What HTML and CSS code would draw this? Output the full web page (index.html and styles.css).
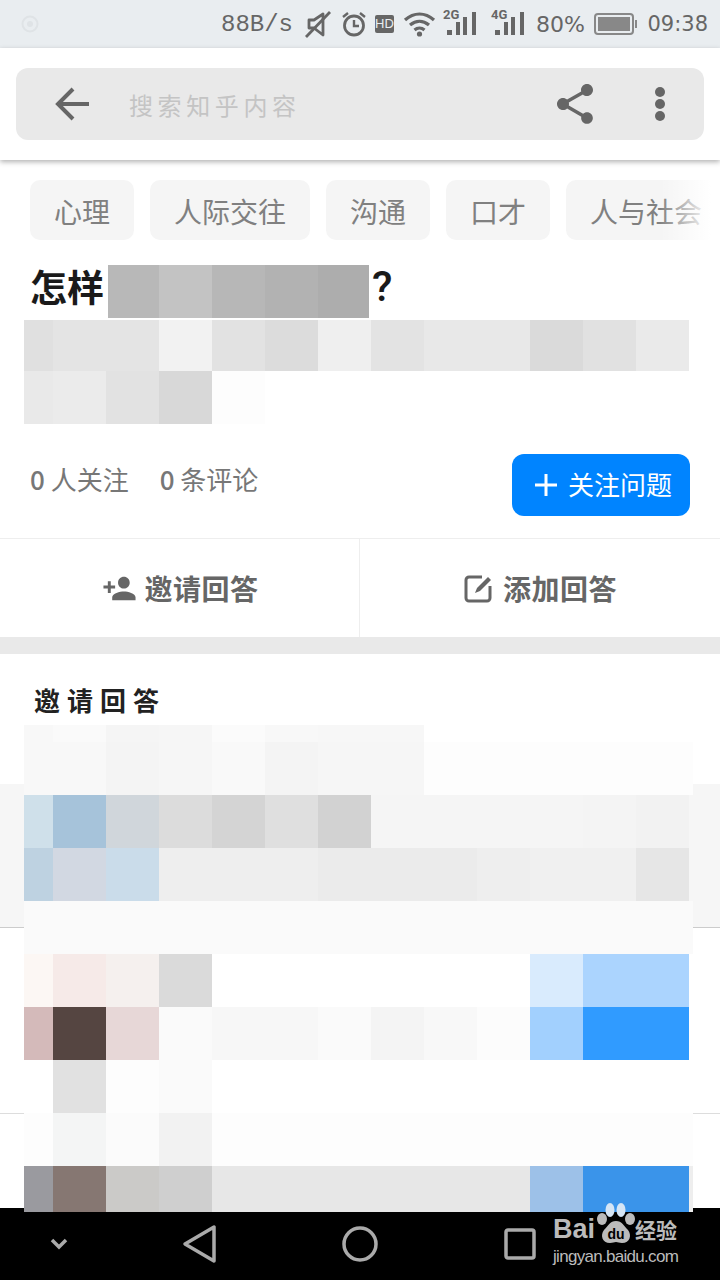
FILE: index.html
```html
<!DOCTYPE html>
<html lang="zh-CN">
<head>
    <meta charset="UTF-8">
    <title>邀请回答</title>
    <link rel="stylesheet" href="styles.css">
</head>
<body>
<div class="screen">
    <div class="status-bar">
        <svg class="status-logo" width="18" height="18" viewBox="0 0 18 18"><circle cx="9" cy="9" r="7.5" fill="none" stroke="#dfe3e6" stroke-width="2"/><circle cx="9" cy="9" r="3" fill="#dfe3e6"/></svg>
        <span class="net-speed">88B/s</span>
        <svg width="29" height="28" viewBox="0 0 29 28"><path d="M5 10h5l9-6v21l-9-7H5z" fill="none" stroke="#666" stroke-width="2.800" stroke-linejoin="round"/><path d="M2 27L26 2" stroke="#666" stroke-width="2.800"/></svg>
        <svg width="24" height="28" viewBox="0 0 24 28"><circle cx="12" cy="15.500" r="9.500" fill="none" stroke="#666" stroke-width="2.800"/><path d="M12 10v6h5" fill="none" stroke="#666" stroke-width="2.400"/><path d="M1 7l5-4M23 7l-5-4" stroke="#666" stroke-width="2.400"/></svg>
        <span class="hd-badge">HD</span>
        <svg class="wifi-icon" width="33" height="26" viewBox="0 0 33 26"><path d="M2 9c9-8 20-8 29 0M7 14c6-5 13-5 19 0M11.500 19c3-2.500 7-2.500 10 0" fill="none" stroke="#666" stroke-width="3.200"/><circle cx="16.500" cy="23" r="2.600" fill="#666"/></svg>
        <svg width="33" height="36" viewBox="0 0 33 36"><text x="0" y="13" class="net-type">2G</text><path d="M4 24h5v5H4zM13 16h4v13h-4zM20 11h4v18h-4zM29 6h4v23h-4z" fill="#666"/></svg>
        <svg width="39" height="36" viewBox="0 0 39 36"><text x="6" y="13" class="net-type">4G</text><path d="M10 24h5v5h-5zM19 16h4v13h-4zM26 11h4v18h-4zM35 6h4v23h-4z" fill="#666"/></svg>
        <span class="battery-pct">80%</span>
        <svg width="44" height="24" viewBox="0 0 44 24"><rect x="1" y="2" width="38" height="20" rx="3" fill="none" stroke="#888" stroke-width="2"/><rect x="4" y="5" width="32" height="14" fill="#888"/><rect x="41" y="8" width="2" height="8" fill="#888"/></svg>
        <span class="clock">09:38</span>
    </div>

    <header class="top-bar">
        <div class="search-box">
            <svg class="back-icon" width="36" height="36" viewBox="0 0 36 36"><path d="M34 18H4M18 3L3 18l15 15" fill="none" stroke="#666" stroke-width="4"/></svg>
            <span class="search-hint">搜索知乎内容</span>
            <svg class="share-icon" width="48" height="48" viewBox="0 0 24 24"><path fill="#666" d="M18 16.080c-.76 0-1.440.3-1.960.77L8.910 12.700c.05-.23.09-.46.09-.7s-.04-.47-.09-.7l7.050-4.110c.54.5 1.250.81 2.040.81 1.660 0 3-1.340 3-3s-1.340-3-3-3-3 1.340-3 3c0 .24.04.47.09.7L8.040 9.810C7.500 9.310 6.790 9 6 9c-1.660 0-3 1.340-3 3s1.340 3 3 3c.79 0 1.500-.31 2.040-.81l7.120 4.160c-.05.21-.08.43-.08.65 0 1.610 1.310 2.920 2.920 2.920 1.610 0 2.920-1.310 2.920-2.920s-1.310-2.920-2.920-2.920z"/></svg>
            <svg class="more-icon" width="12" height="36" viewBox="0 0 12 36"><circle cx="6" cy="6" r="5" fill="#666"/><circle cx="6" cy="18" r="5" fill="#666"/><circle cx="6" cy="30" r="5" fill="#666"/></svg>
        </div>
    </header>

    <main class="page">
        <div class="topic-row">
            <span class="topic">心理</span>
            <span class="topic">人际交往</span>
            <span class="topic">沟通</span>
            <span class="topic">口才</span>
            <span class="topic">人与社会</span>
            <div class="topic-fade"></div>
        </div>

        <h1 class="question-title">怎样<svg class="title-mosaic" width="261" height="53" viewBox="108 265 261 53" shape-rendering="crispEdges"><rect x="108" y="265" width="51" height="53" fill="#b8b8b8"/><rect x="159" y="265" width="53" height="53" fill="#c3c3c3"/><rect x="212" y="265" width="53" height="53" fill="#b7b7b7"/><rect x="265" y="265" width="53" height="53" fill="#b2b2b2"/><rect x="318" y="265" width="51" height="53" fill="#adadad"/></svg><span class="question-mark">?</span></h1>

        <svg class="desc-mosaic" width="665" height="104" viewBox="24 320 665 104" shape-rendering="crispEdges">
            <rect x="24" y="320" width="29" height="51" fill="#e0e0e0"/>
            <rect x="53" y="320" width="106" height="51" fill="#e4e4e4"/>
            <rect x="159" y="320" width="53" height="51" fill="#f2f2f2"/>
            <rect x="212" y="320" width="53" height="51" fill="#e2e2e2"/>
            <rect x="265" y="320" width="53" height="51" fill="#dcdcdc"/>
            <rect x="318" y="320" width="53" height="51" fill="#efefef"/>
            <rect x="371" y="320" width="53" height="51" fill="#e3e3e3"/>
            <rect x="424" y="320" width="106" height="51" fill="#e8e8e8"/>
            <rect x="530" y="320" width="53" height="51" fill="#dadada"/>
            <rect x="583" y="320" width="53" height="51" fill="#e1e1e1"/>
            <rect x="636" y="320" width="53" height="51" fill="#eaeaea"/>
            <rect x="24" y="371" width="29" height="53" fill="#e9e9e9"/>
            <rect x="53" y="371" width="53" height="53" fill="#ebebeb"/>
            <rect x="106" y="371" width="53" height="53" fill="#e2e2e2"/>
            <rect x="159" y="371" width="53" height="53" fill="#d8d8d8"/>
            <rect x="212" y="371" width="53" height="53" fill="#fdfdfd"/>
        </svg>

        <div class="meta-row">
            <div class="meta-counts">
                <span><b>0</b> 人关注</span>
                <span><b>0</b> 条评论</span>
            </div>
            <button class="follow-btn"><svg width="24" height="24" viewBox="0 0 24 24"><path d="M12 1v22M1 12h22" stroke="#fff" stroke-width="3"/></svg><span class="follow-label">关注问题</span></button>
        </div>

        <div class="action-row">
            <div class="action action-invite">
                <svg width="35" height="35" viewBox="0 0 24 24"><path fill="#666" d="M15 12c2.210 0 4-1.790 4-4s-1.790-4-4-4-4 1.790-4 4 1.790 4 4 4zm-9-2V7H4v3H1v2h3v3h2v-3h3v-2H6zm9 4c-2.670 0-8 1.340-8 4v2h16v-2c0-2.660-5.330-4-8-4z"/></svg>
                邀请回答
            </div>
            <div class="action action-answer">
                <svg width="30" height="30" viewBox="0 0 30 30"><path d="M18 4H5a3 3 0 0 0-3 3v18a3 3 0 0 0 3 3h18a3 3 0 0 0 3-3V13" fill="none" stroke="#666" stroke-width="3"/><path d="M11 20l2-5L24 4l3 3-11 11z" fill="#666"/></svg>
                添加回答
            </div>
        </div>

        <section class="invite">
            <h2 class="invite-title">邀请回答</h2>
            <div class="invite-row invite-row-first"></div>
            <div class="invite-row"></div>
            <div class="invite-row invite-row-last"></div>

            <svg class="invite-mosaic" width="669" height="487" viewBox="24 725 669 487" shape-rendering="crispEdges">
                <rect x="24" y="725" width="29" height="17" fill="#f8f8f8"/><rect x="53" y="725" width="53" height="17" fill="#fafafa"/><rect x="106" y="725" width="53" height="17" fill="#f5f5f5"/><rect x="159" y="725" width="53" height="17" fill="#f6f6f6"/><rect x="212" y="725" width="53" height="17" fill="#fbfbfb"/><rect x="265" y="725" width="53" height="17" fill="#f8f8f8"/><rect x="318" y="725" width="106" height="17" fill="#f7f7f7"/>
                <rect x="24" y="742" width="82" height="53" fill="#f8f8f8"/><rect x="106" y="742" width="53" height="53" fill="#f4f4f4"/><rect x="159" y="742" width="53" height="53" fill="#f6f6f6"/><rect x="212" y="742" width="53" height="53" fill="#f9f9f9"/><rect x="265" y="742" width="53" height="53" fill="#f4f4f4"/><rect x="318" y="742" width="106" height="53" fill="#f6f6f6"/><rect x="424" y="742" width="269" height="53" fill="#fdfdfd"/>
                <rect x="24" y="795" width="29" height="53" fill="#cfe0ea"/><rect x="53" y="795" width="53" height="53" fill="#a6c3da"/><rect x="106" y="795" width="53" height="53" fill="#d0d6db"/><rect x="159" y="795" width="53" height="53" fill="#dcdcdc"/><rect x="212" y="795" width="53" height="53" fill="#d4d4d4"/><rect x="265" y="795" width="53" height="53" fill="#dfdfdf"/><rect x="318" y="795" width="53" height="53" fill="#d2d2d2"/><rect x="371" y="795" width="212" height="53" fill="#f5f5f5"/><rect x="583" y="795" width="53" height="53" fill="#f4f4f4"/><rect x="636" y="795" width="53" height="53" fill="#f2f2f2"/><rect x="689" y="795" width="4" height="106" fill="#f6f6f6"/>
                <rect x="24" y="848" width="29" height="53" fill="#bed2e1"/><rect x="53" y="848" width="53" height="53" fill="#d2d8e2"/><rect x="106" y="848" width="53" height="53" fill="#cadcea"/><rect x="159" y="848" width="159" height="53" fill="#eeeeee"/><rect x="318" y="848" width="159" height="53" fill="#ebebeb"/><rect x="477" y="848" width="53" height="53" fill="#eeeeee"/><rect x="530" y="848" width="106" height="53" fill="#f0f0f0"/><rect x="636" y="848" width="53" height="53" fill="#e6e6e6"/>
                <rect x="24" y="901" width="669" height="53" fill="#fafafa"/>
                <rect x="24" y="954" width="29" height="53" fill="#fcf7f4"/><rect x="53" y="954" width="53" height="53" fill="#f6eae8"/><rect x="106" y="954" width="53" height="53" fill="#f5f0ee"/><rect x="159" y="954" width="53" height="53" fill="#dadada"/><rect x="212" y="954" width="318" height="53" fill="#ffffff"/><rect x="530" y="954" width="53" height="53" fill="#d9ebfd"/><rect x="583" y="954" width="106" height="53" fill="#abd4fe"/>
                <rect x="24" y="1007" width="29" height="53" fill="#d4baba"/><rect x="53" y="1007" width="53" height="53" fill="#554541"/><rect x="106" y="1007" width="53" height="53" fill="#e7d7d7"/><rect x="159" y="1007" width="53" height="53" fill="#fafafa"/><rect x="212" y="1007" width="106" height="53" fill="#f7f7f7"/><rect x="318" y="1007" width="53" height="53" fill="#fafafa"/><rect x="371" y="1007" width="53" height="53" fill="#f4f4f4"/><rect x="424" y="1007" width="53" height="53" fill="#f8f8f8"/><rect x="477" y="1007" width="53" height="53" fill="#fcfcfc"/><rect x="530" y="1007" width="53" height="53" fill="#a2d0fe"/><rect x="583" y="1007" width="106" height="53" fill="#309bff"/>
                <rect x="24" y="1060" width="669" height="53" fill="#ffffff"/><rect x="53" y="1060" width="53" height="53" fill="#e1e1e1"/><rect x="106" y="1060" width="53" height="53" fill="#fdfdfd"/><rect x="159" y="1060" width="53" height="53" fill="#fafafa"/>
                <rect x="24" y="1113" width="669" height="53" fill="#fdfdfd"/><rect x="53" y="1113" width="53" height="53" fill="#f4f5f5"/><rect x="106" y="1113" width="53" height="53" fill="#fbfbfb"/><rect x="159" y="1113" width="53" height="53" fill="#f2f2f2"/>
                <rect x="24" y="1166" width="29" height="46" fill="#9a9a9f"/><rect x="53" y="1166" width="53" height="46" fill="#867772"/><rect x="106" y="1166" width="53" height="46" fill="#cbcac8"/><rect x="159" y="1166" width="53" height="46" fill="#cfcfcf"/><rect x="212" y="1166" width="318" height="46" fill="#e7e7e7"/><rect x="530" y="1166" width="53" height="46" fill="#9dc1e8"/><rect x="583" y="1166" width="106" height="46" fill="#3a94ea"/><rect x="689" y="1166" width="4" height="46" fill="#eeeeee"/>
            </svg>
        </section>
    </main>

    <nav class="nav-bar">
        <span class="nav-slot nav-slot-hide"><svg width="18" height="12" viewBox="0 0 18 12"><path d="M2 2l7 7 7-7" fill="none" stroke="#aaa" stroke-width="3.500"/></svg></span>
        <span class="nav-slot nav-slot-mid"><svg width="36" height="40" viewBox="0 0 36 40"><path d="M32 3v34L3 20z" fill="none" stroke="#aaa" stroke-width="3.500" stroke-linejoin="round"/></svg></span>
        <span class="nav-slot nav-slot-mid"><svg width="36" height="36" viewBox="0 0 36 36"><circle cx="18" cy="18" r="16" fill="none" stroke="#aaa" stroke-width="3.500"/></svg></span>
        <span class="nav-slot nav-slot-mid"><svg width="32" height="32" viewBox="0 0 32 32"><rect x="2" y="2" width="28" height="28" rx="2" fill="none" stroke="#aaa" stroke-width="3.500"/></svg></span>
    </nav>

    <div class="watermark">
        <div class="wm-top">
            <span class="wm-bai">Bai</span>
            <svg class="wm-paw" width="38" height="41" viewBox="0 0 38 41">
                <ellipse cx="13" cy="7" rx="4.500" ry="7" fill="#d5e5f5"/><ellipse cx="24" cy="7" rx="4.500" ry="7" fill="#d5e5f5"/>
                <ellipse cx="5" cy="16" rx="5" ry="6" fill="#bbb"/><ellipse cx="33" cy="16" rx="5" ry="6" fill="#bbb"/>
                <path d="M19 18c-6 0-8 5-12 9-4 5-2 13 6 13 3 0 4-1 6-1s3 1 6 1c8 0 10-8 6-13-4-4-6-9-12-9z" fill="#bbb"/>
                <text x="19" y="36" class="wm-du">du</text>
            </svg>
            <span class="wm-name">经验</span>
        </div>
        <div class="wm-url">jingyan.baidu.com</div>
    </div>
</div>
</body>
</html>
```

FILE: styles.css
```css
* {
    box-sizing: border-box;
}

body {
    margin: 0;
    padding: 0;
    overflow: hidden;
    font-family: "Noto Sans CJK SC", "Liberation Sans", sans-serif;
}

.screen {
    position: relative;
    width: 720px;
    height: 1280px;
    overflow: hidden;
    display: flex;
    flex-direction: column;
    background: #fff;
}

/* status bar */
.status-bar {
    height: 48px;
    flex: none;
    display: flex;
    align-items: center;
    gap: 9px;
    padding: 0 12px 0 21px;
    background: #e9edf0;
    color: #666;
    font-family: "DejaVu Sans", sans-serif;
    font-size: 20px;
}

.status-logo {
    margin-right: auto;
}

.net-speed {
    width: 74px;
    font-family: "Liberation Mono", monospace;
    font-size: 24px;
    white-space: nowrap;
}

.hd-badge {
    width: 19px;
    height: 18px;
    background: #666;
    color: #e9edf0;
    border-radius: 2px;
    font-family: "Liberation Sans", sans-serif;
    font-size: 13px;
    line-height: 18px;
    text-align: center;
}

.wifi-icon {
    margin-right: -2px;
}

.net-type {
    font-family: "Roboto", sans-serif;
    font-size: 13px;
    font-weight: 700;
    fill: #666;
}

.battery-pct {
    width: 52px;
    text-align: right;
    font-size: 22px;
}

.clock {
    width: 61px;
    text-align: right;
    font-size: 21px;
}

/* search bar */
.top-bar {
    position: relative;
    z-index: 2;
    height: 112px;
    flex: none;
    padding: 20px 16px;
    background: #fff;
    box-shadow: 0 2px 5px rgba(0, 0, 0, 0.3);
}

.search-box {
    height: 72px;
    display: flex;
    align-items: center;
    padding: 0 38px 0 39px;
    background: #e9e9e9;
    border-radius: 12px;
}

.search-hint {
    margin-left: 38px;
    color: #c4c4c4;
    font-size: 24px;
    letter-spacing: 4.6px;
}

.share-icon {
    margin-left: auto;
}

.more-icon {
    margin-left: 55px;
}

/* question */
.page {
    flex: 1;
    min-height: 0;
    display: flex;
    flex-direction: column;
}

.topic-row {
    position: relative;
    display: flex;
    gap: 16px;
    padding: 20px 0 0 30px;
    overflow: hidden;
    flex: none;
}

.topic {
    flex: none;
    height: 60px;
    padding: 0 24px;
    background: #f5f5f5;
    border-radius: 10px;
    color: #808080;
    font-size: 28px;
    line-height: 62px;
}

.topic-fade {
    position: absolute;
    top: 0;
    right: 0;
    bottom: 0;
    width: 60px;
    background: linear-gradient(to right, rgba(255, 255, 255, 0), #fff 85%);
}

.question-title {
    display: flex;
    align-items: flex-start;
    height: 53px;
    flex: none;
    margin: 25px 0 2px;
    padding-left: 30px;
    color: #1a1a1a;
    font-size: 37px;
    font-weight: 700;
    line-height: 42px;
}

.title-mosaic {
    margin-left: 4px;
}

.question-mark {
    margin-left: 3px;
    font-family: "Roboto", sans-serif;
    font-size: 42px;
    font-weight: 500;
    line-height: 44px;
}

.desc-mosaic {
    display: block;
    flex: none;
    margin-left: 24px;
}

.meta-row {
    height: 114px;
    flex: none;
    display: flex;
    justify-content: space-between;
    padding: 30px 30px 0;
}

.meta-counts {
    display: flex;
    gap: 31px;
    height: 48px;
    align-items: center;
    color: #777;
    font-size: 26px;
}

.meta-counts b {
    font-weight: 500;
}

.follow-btn {
    display: flex;
    align-items: center;
    gap: 10px;
    width: 178px;
    height: 62px;
    padding: 0 0 0 22px;
    border: none;
    border-radius: 12px;
    background: #0084ff;
    color: #fff;
    font-family: inherit;
    font-size: 26px;
}

.follow-label {
    margin-top: -4px;
}

.action-row {
    height: 116px;
    flex: none;
    display: flex;
    border-top: 1px solid #eee;
    border-bottom: 17px solid #e9e9e9;
}

.action {
    display: flex;
    align-items: center;
    justify-content: center;
    gap: 7px;
    color: #666;
    font-size: 28px;
    font-weight: 700;
    letter-spacing: 0.5px;
}

.action-invite {
    width: 359px;
    padding-left: 2px;
}

.action-answer {
    flex: 1;
    gap: 9px;
    padding-left: 1px;
    border-left: 1px solid #eee;
}

/* invite list */
.invite {
    position: relative;
    flex: 1;
}

.invite-title {
    height: 130px;
    margin: 0;
    padding: 27px 0 0 34px;
    color: #222;
    font-size: 26px;
    font-weight: 700;
    letter-spacing: 7px;
}

.invite-row {
    height: 186px;
    border-bottom: 1px solid #ddd;
}

.invite-row-first {
    height: 144px;
    background: #f6f6f6;
    border-bottom-color: #ccc;
}

.invite-row-last {
    height: 94px;
    border-bottom: none;
}

.invite-mosaic {
    position: absolute;
    top: 71px;
    left: 24px;
    z-index: 3;
}

/* system nav */
.nav-bar {
    height: 72px;
    flex: none;
    display: flex;
    align-items: center;
    background: #000;
}

.nav-slot {
    display: flex;
    align-items: center;
    justify-content: center;
}

.nav-slot-hide {
    width: 120px;
    padding-right: 2px;
}

.nav-slot-mid {
    width: 160px;
}

/* watermark */
.watermark {
    position: absolute;
    left: 553px;
    top: 1203px;
    z-index: 4;
    color: #bbb;
}

.wm-top {
    display: flex;
    align-items: flex-end;
    height: 41px;
}

.wm-bai {
    width: 44px;
    font-family: "Liberation Sans", sans-serif;
    font-size: 27px;
    font-weight: 700;
    line-height: 30px;
}

.wm-name {
    margin-left: 0;
    font-size: 21px;
    font-weight: 700;
    line-height: 30px;
}

.wm-du {
    font-family: "Liberation Sans", sans-serif;
    font-size: 14px;
    font-weight: 700;
    fill: #000;
    text-anchor: middle;
}

.wm-url {
    margin-top: 3px;
    font-family: "Liberation Sans", sans-serif;
    font-size: 17px;
    letter-spacing: -0.7px;
    line-height: 20px;
    white-space: nowrap;
}
```
